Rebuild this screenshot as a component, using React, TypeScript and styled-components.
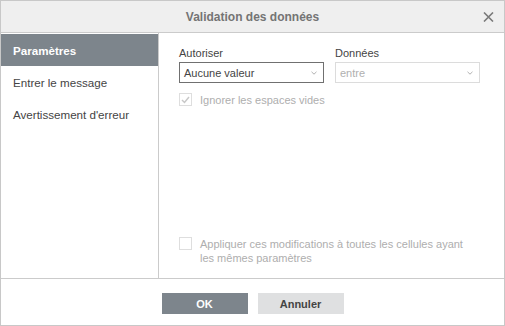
import { styled, createGlobalStyle } from "styled-components";

const Global = createGlobalStyle`
  html, body {
    margin: 0;
    padding: 0;
    background: #fff;
  }
  * {
    box-sizing: border-box;
  }
`

const Dialog = styled.div`
  width: 505px;
  height: 326px;
  border: 1px solid #c8c8c8;
  display: flex;
  flex-direction: column;
  font-family: "Liberation Sans", Arial, sans-serif;
  background: #fff;
`

const Header = styled.div`
  height: 32px;
  flex: none;
  background: #efefef;
  border-bottom: 1px solid #cbcbcb;
  display: flex;
  align-items: center;
  justify-content: center;
  position: relative;
`

const Title = styled.div`
  font-size: 12px;
  font-weight: bold;
  color: #747474;
`

const Close = styled.button`
  position: absolute;
  right: 10px;
  top: 10px;
  width: 12px;
  height: 12px;
  padding: 0;
  border: 0;
  background: none;
  display: flex;
  align-items: center;
  justify-content: center;
`

const Body = styled.div`
  flex: 1;
  display: flex;
  min-height: 0;
`

const Sidebar = styled.div`
  width: 158px;
  flex: none;
  border-right: 1px solid #cbcbcb;
  padding-top: 1px;
`

const Item = styled.div<{ $active?: boolean }>`
  height: 32px;
  display: flex;
  align-items: center;
  padding-left: 12px;
  font-size: 11.6px;
  font-weight: ${p => (p.$active ? "bold" : "normal")};
  color: ${p => (p.$active ? "#fff" : "#444")};
  background: ${p => (p.$active ? "#7d858c" : "transparent")};
`

const Content = styled.div`
  flex: 1;
  display: flex;
  flex-direction: column;
  padding: 13px 26px 13px 20px;
`

const Row = styled.div`
  display: flex;
  gap: 11px;
`

const Field = styled.div`
  width: 145px;
  display: flex;
  flex-direction: column;
`

const Label = styled.div`
  font-size: 11px;
  line-height: 14px;
  color: #444;
  margin-bottom: 2px;
`

const Select = styled.div<{ $disabled?: boolean }>`
  height: 21px;
  border: 1px solid ${p => (p.$disabled ? "#dcdcdc" : "#707070")};
  display: flex;
  align-items: center;
  justify-content: space-between;
  padding: 0 6px 0 4px;
  font-size: 11px;
  color: ${p => (p.$disabled ? "#b0b0b0" : "#444")};
`

const Check = styled.label<{ $top?: number }>`
  display: flex;
  align-items: flex-start;
  gap: 8px;
  font-size: 11px;
  line-height: 14px;
  color: #aeaeae;
  margin-top: ${p => p.$top ?? 0}px;
`

const Box = styled.span`
  width: 13px;
  height: 13px;
  flex: none;
  border: 1px solid #dedede;
  background: #fff;
  display: flex;
  align-items: center;
  justify-content: center;
`

const Bottom = styled.div`
  margin-top: auto;
`

const Footer = styled.div`
  height: 47px;
  flex: none;
  border-top: 1px solid #cbcbcb;
  display: flex;
  justify-content: center;
  gap: 10px;
  padding-top: 14px;
`

const Button = styled.button<{ $primary?: boolean }>`
  width: 86px;
  height: 21px;
  border: 0;
  padding: 0;
  font-family: "Liberation Sans", Arial, sans-serif;
  font-size: 11px;
  font-weight: bold;
  color: ${p => (p.$primary ? "#fff" : "#444")};
  background: ${p => (p.$primary ? "#7d858c" : "#dfe0e1")};
`

const Caret = () => (
  <svg width="6" height="4" viewBox="0 0 6 4">
    <path d="M0.5 0.8 L3 3.2 L5.5 0.8" fill="none" stroke="#a8a8a8" strokeWidth="0.9" />
  </svg>
)

export default function App() {
  return (
    <>
      <Global />
      <Dialog>
        <Header>
          <Title>Validation des données</Title>
          <Close aria-label="Fermer">
            <svg width="11" height="10" viewBox="0 0 11 10">
              <path d="M1 0.5 L10 9.5 M10 0.5 L1 9.5" stroke="#7a7a7a" strokeWidth="1.6" />
            </svg>
          </Close>
        </Header>
        <Body>
          <Sidebar>
            <Item $active>Paramètres</Item>
            <Item>Entrer le message</Item>
            <Item>Avertissement d'erreur</Item>
          </Sidebar>
          <Content>
            <Row>
              <Field>
                <Label>Autoriser</Label>
                <Select>
                  <span>Aucune valeur</span>
                  <Caret />
                </Select>
              </Field>
              <Field>
                <Label>Données</Label>
                <Select $disabled>
                  <span>entre</span>
                  <Caret />
                </Select>
              </Field>
            </Row>
            <Check $top={10}>
              <Box>
                <svg width="9" height="8" viewBox="0 0 9 8">
                  <path d="M1 4 L3.5 6.5 L8 1" fill="none" stroke="#c8c8c8" strokeWidth="1.5" />
                </svg>
              </Box>
              <span>Ignorer les espaces vides</span>
            </Check>
            <Bottom>
              <Check>
                <Box />
                <span>Appliquer ces modifications à toutes les cellules ayant les mêmes paramètres</span>
              </Check>
            </Bottom>
          </Content>
        </Body>
        <Footer>
          <Button $primary>OK</Button>
          <Button>Annuler</Button>
        </Footer>
      </Dialog>
    </>
  )
}
